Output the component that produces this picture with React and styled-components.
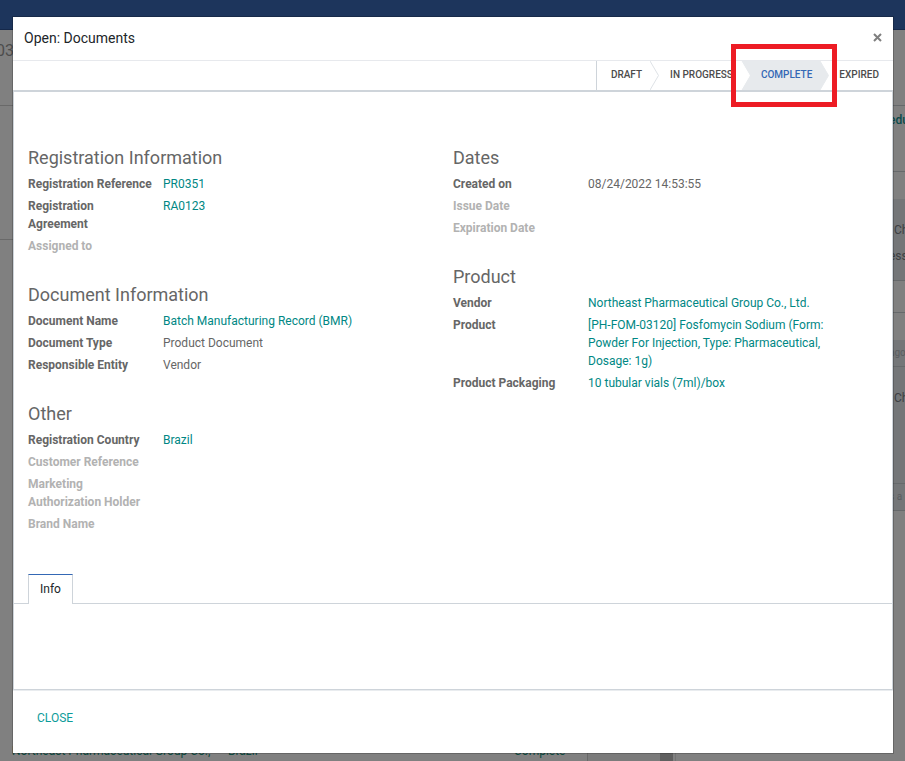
import React from "react";
import styled, { createGlobalStyle } from "styled-components";

const GlobalStyle = createGlobalStyle`
  * { box-sizing: border-box; }
  body {
    margin: 0;
    background: #808080;
    font-family: Roboto, "Liberation Sans", sans-serif;
    font-size: 12px;
    line-height: 18px;
    color: #666666;
  }
  button { font: inherit; border: 0; background: none; padding: 0; cursor: pointer; }
`;

/* Page behind the dialog */
const Page = styled.div`
  position: relative;
  display: flex;
  flex-direction: column;
  min-height: 100vh;
  overflow: hidden;
`;

const TopBar = styled.div`
  height: 30px;
  background: #1d355c;
  border-bottom: 1px solid #15284a;
`;

const Backdrop = styled.div`
  flex: 1;
  display: flex;
`;

const Main = styled.div`
  flex: 1;
  display: flex;
  flex-direction: column;
`;

const Band = styled.div`
  height: ${(p) => p.$h}px;
  background: ${(p) => p.$bg || "#808080"};
  border-bottom: 1px solid ${(p) => p.$line || "transparent"};
  overflow: hidden;
`;

const RecordCode = styled.div`
  display: flex;
  justify-content: flex-end;
  width: 14px;
  margin-top: 12px;
  font-size: 16px;
  color: #4c4c4c;
`;

const Lower = styled.div`
  flex: 1;
  display: flex;
  align-items: stretch;
`;

const ListRow = styled.div`
  flex: 1;
  display: grid;
  grid-template-columns: 216px 286px 1fr;
  align-items: end;
  padding: 0 0 1px 12px;
  color: #0d4a3f;
`;

const Gutter = styled.div`
  width: 73px;
  background: #7b7b7b;
  border-left: 1px solid #696969;
`;

const ScrollThumb = styled.div`
  width: 13px;
  background: #5f5f5f;
`;

const Spacer = styled.div`
  width: 214px;
  margin-left: 2px;
  border-left: 1px solid #737373;
`;

const Chatter = styled.div`
  width: 16px;
  white-space: nowrap;
  overflow: hidden;
`;

const ChatterText = styled.div`
  margin-top: ${(p) => p.$top}px;
  padding-left: ${(p) => (p.$indent ? 5 : 0)}px;
  color: ${(p) => p.$color || "#3d4043"};
  font-size: ${(p) => (p.$small ? 10 : 12)}px;
  font-weight: ${(p) => (p.$bold ? 500 : 400)};
`;

/* Dialog */
const Overlay = styled.div`
  position: absolute;
  inset: 0;
  padding: 17px 12px 8px 13px;
`;

const Dialog = styled.section`
  background: #ffffff;
  box-shadow: 0 0 0 1px rgba(0, 0, 0, 0.2);
`;

const Header = styled.header`
  display: flex;
  align-items: center;
  justify-content: space-between;
  height: 44px;
  padding: 0 10px 2px 11px;
  border-bottom: 1px solid #e7e9ed;
`;

const Title = styled.h4`
  margin: 0;
  font-size: 14px;
  font-weight: 400;
  color: #212529;
`;

const CloseIcon = styled.button`
  display: flex;
  color: #7f7f7f;
`;

const StatusBar = styled.div`
  display: flex;
  justify-content: flex-end;
  height: 31px;
  border-bottom: 2px solid #ced4da;
`;

const Stages = styled.div`
  display: flex;
  border-left: 1px solid #ced4da;
`;

const Stage = styled.button`
  position: relative;
  padding: 0 8px 1px 20px;
  font-size: 10px;
  font-weight: 500;
  text-transform: uppercase;
  color: ${(p) => (p.$active ? "#3468b5" : "#4c4c4c")};
  background: ${(p) => (p.$active ? "#e7eaed" : "#ffffff")};

  &:first-child { padding-left: 14px; }
  &:last-child { padding: 0 14px 1px 19px; }
`;

const Arrow = styled.svg`
  position: absolute;
  top: 0;
  left: 100%;
  z-index: 1;
`;

const Highlight = styled.span`
  position: absolute;
  inset: -17px -17px;
  left: -10px;
  border: 5px solid #ed1c24;
  z-index: 2;
`;

const Sheet = styled.div`
  border: 1px solid #ced4da;
  border-top: 0;
  padding-top: 53px;
`;

const Columns = styled.div`
  display: grid;
  grid-template-columns: 1fr 1fr;
  padding: 0 14px 39px;
`;

const Column = styled.div`
  display: flex;
  flex-direction: column;
  gap: 25px;
`;

const GroupTitle = styled.h2`
  margin: 0 0 2px;
  font-size: 18px;
  font-weight: 400;
  line-height: 26px;
`;

const Fields = styled.dl`
  margin: 0;
`;

const Field = styled.div`
  display: grid;
  grid-template-columns: 125px minmax(0, 256px);
  column-gap: 10px;
  padding: 2px 0;
`;

const Label = styled.dt`
  font-weight: 700;
  color: ${(p) => (p.$empty ? "#b2b2b2" : "#666666")};
`;

const Value = styled.dd`
  margin: 0;
`;

const Link = styled.a`
  color: #008784;
  text-decoration: none;
`;

const Tabs = styled.div`
  display: flex;
  padding-left: 14px;
  border-bottom: 1px solid #ced4da;
`;

const Tab = styled.button`
  height: 30px;
  margin-bottom: -1px;
  padding: 0 11px 1px;
  border: 1px solid #ced4da;
  border-top-color: #3468b5;
  border-bottom: 0;
  background: #ffffff;
  color: #212529;
`;

const TabPanel = styled.div`
  height: 85px;
`;

const Footer = styled.footer`
  display: flex;
  align-items: center;
  height: 63px;
  padding: 0 24px 8px;
  border-top: 1px solid #e9ecef;
`;

const CloseButton = styled.button`
  color: #0d9c9a;
  text-transform: uppercase;
`;

const left = [
  ["Registration Information", [
    ["Registration Reference", "PR0351", true],
    ["Registration Agreement", "RA0123", true],
    ["Assigned to"],
  ]],
  ["Document Information", [
    ["Document Name", "Batch Manufacturing Record (BMR)", true],
    ["Document Type", "Product Document"],
    ["Responsible Entity", "Vendor"],
  ]],
  ["Other", [
    ["Registration Country", "Brazil", true],
    ["Customer Reference"],
    ["Marketing Authorization Holder"],
    ["Brand Name"],
  ]],
];

const right = [
  ["Dates", [
    ["Created on", "08/24/2022 14:53:55"],
    ["Issue Date"],
    ["Expiration Date"],
  ]],
  ["Product", [
    ["Vendor", "Northeast Pharmaceutical Group Co., Ltd.", true],
    ["Product", "[PH-FOM-03120] Fosfomycin Sodium (Form: Powder For Injection, Type: Pharmaceutical, Dosage: 1g)", true],
    ["Product Packaging", "10 tubular vials (7ml)/box", true],
  ]],
];

function GroupColumn({ groups }) {
  return (
    <Column>
      {groups.map(([title, fields]) => (
        <div key={title}>
          <GroupTitle>{title}</GroupTitle>
          <Fields>
            {fields.map(([label, text, isLink]) => (
              <Field key={label}>
                <Label $empty={!text}>{label}</Label>
                <Value>{isLink ? <Link href="#">{text}</Link> : text}</Value>
              </Field>
            ))}
          </Fields>
        </div>
      ))}
    </Column>
  );
}

function StageArrow({ fill, stroke }) {
  return (
    <Arrow width="10" height="29" viewBox="0 0 10 29" aria-hidden="true">
      <path d="M0 0L8.500 14.500L0 29Z" fill={fill} />
      <path d="M0 0L8.500 14.500L0 29" fill="none" stroke={stroke} />
    </Arrow>
  );
}

export default function App() {
  return (
    <Page>
      <GlobalStyle />
      <TopBar />
      <Backdrop>
        <Main>
          <Band $h={76} $line="#696969"><RecordCode>03</RecordCode></Band>
          <Band $h={134} $line="#696969" />
          <Band $h={43} />
          <Lower>
            <ListRow>
              <span>Northeast Pharmaceutical Group Co.,</span>
              <span>Brazil</span>
              <span>Complete</span>
            </ListRow>
            <Gutter />
            <ScrollThumb />
            <Spacer />
          </Lower>
        </Main>
        <Chatter>
          <Band $h={76} $line="#66696b" />
          <Band $h={66} $line="#66696b">
            <ChatterText $top={5} $bold $color="#0b4a4a">edu</ChatterText>
          </Band>
          <Band $h={27} />
          <Band $h={82} $bg="#747678" $line="#66696b">
            <ChatterText $top={22} $indent>Ch</ChatterText>
            <ChatterText $top={8}>ess</ChatterText>
          </Band>
          <Band $h={32} $line="#66696b" />
          <Band $h={27} />
          <Band $h={27} $bg="#747678" $line="#66696b">
            <ChatterText $top={4} $small $color="#5a5d60">ago</ChatterText>
          </Band>
          <Band $h={117} $bg="#747678" $line="#66696b">
            <ChatterText $top={22} $indent>Ch</ChatterText>
          </Band>
          <Band $h={27} $bg="#747678" $line="#66696b">
            <ChatterText $top={4} $small $color="#5a5d60">s a</ChatterText>
          </Band>
        </Chatter>
      </Backdrop>

      <Overlay>
        <Dialog role="dialog" aria-labelledby="dialog-title">
          <Header>
            <Title id="dialog-title">Open: Documents</Title>
            <CloseIcon aria-label="Close">
              <svg width="11" height="11" viewBox="0 0 11 11">
                <path d="M2 2L9 9M9 2L2 9" stroke="currentColor" strokeWidth="2" />
              </svg>
            </CloseIcon>
          </Header>
          <StatusBar>
            <Stages>
              <Stage>Draft<StageArrow fill="#ffffff" stroke="#dee2e6" /></Stage>
              <Stage>In Progress<StageArrow fill="#ffffff" stroke="#ffffff" /></Stage>
              <Stage $active aria-current="step">
                Complete
                <StageArrow fill="#e7eaed" stroke="#e7eaed" />
                <Highlight />
              </Stage>
              <Stage>Expired</Stage>
            </Stages>
          </StatusBar>
          <Sheet>
            <Columns>
              <GroupColumn groups={left} />
              <GroupColumn groups={right} />
            </Columns>
            <Tabs role="tablist">
              <Tab role="tab" aria-selected="true">Info</Tab>
            </Tabs>
            <TabPanel role="tabpanel" />
          </Sheet>
          <Footer>
            <CloseButton>Close</CloseButton>
          </Footer>
        </Dialog>
      </Overlay>
    </Page>
  );
}
